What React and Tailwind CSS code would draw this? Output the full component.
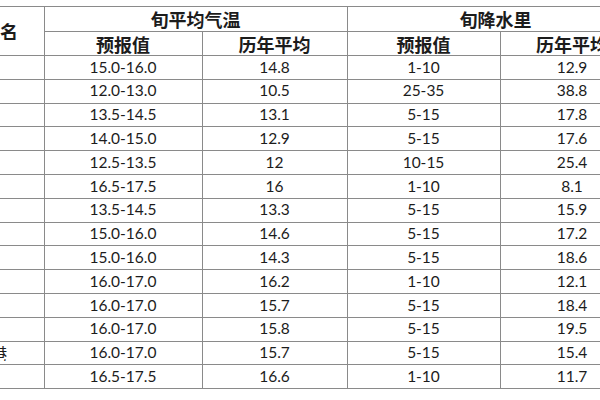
import React from "react";

const rows = [
  ["", "15.0-16.0", "14.8", "1-10", "12.9"],
  ["", "12.0-13.0", "10.5", "25-35", "38.8"],
  ["", "13.5-14.5", "13.1", "5-15", "17.8"],
  ["", "14.0-15.0", "12.9", "5-15", "17.6"],
  ["", "12.5-13.5", "12", "10-15", "25.4"],
  ["", "16.5-17.5", "16", "1-10", "8.1"],
  ["", "13.5-14.5", "13.3", "5-15", "15.9"],
  ["", "15.0-16.0", "14.6", "5-15", "17.2"],
  ["", "15.0-16.0", "14.3", "5-15", "18.6"],
  ["", "16.0-17.0", "16.2", "1-10", "12.1"],
  ["", "16.0-17.0", "15.7", "5-15", "18.4"],
  ["", "16.0-17.0", "15.8", "5-15", "19.5"],
  ["湄洲湾港", "16.0-17.0", "15.7", "5-15", "15.4"],
  ["", "16.5-17.5", "16.6", "1-10", "11.7"],
];

const cjk = "font-['Noto_Sans_CJK_SC',sans-serif]";
const num = "font-['Lato','Noto_Sans_CJK_SC',sans-serif]";

export default function App() {
  return (
    <div className="w-[600px] h-[400px] overflow-hidden bg-white pt-[6px]">
      <table className="table-fixed border-collapse w-[644px] text-[#1c1c1c]">
        <colgroup>
          <col className="w-[44px]" />
          <col className="w-[158px]" />
          <col className="w-[145px]" />
          <col className="w-[153px]" />
          <col className="w-[144px]" />
        </colgroup>
        <thead>
          <tr className="h-[25px]">
            <th
              rowSpan={2}
              className={`border-t border-r border-b border-[#8a8a8a] p-0 ${cjk} font-bold text-[18px] leading-none`}
            >
              <div className="w-[43px] overflow-hidden">
                <div className="ml-[-18px] whitespace-nowrap text-left">地名</div>
              </div>
            </th>
            <th
              colSpan={2}
              className={`border border-[#8a8a8a] p-0 ${cjk} font-bold text-[18px] leading-none`}
            >
              旬平均气温
            </th>
            <th
              colSpan={2}
              className={`border border-[#8a8a8a] p-0 ${cjk} font-bold text-[18px] leading-none`}
            >
              旬降水里
            </th>
          </tr>
          <tr className="h-[24px]">
            {["预报值", "历年平均", "预报值", "历年平均"].map((t, i) => (
              <th
                key={i}
                className={`border border-[#8a8a8a] p-0 ${cjk} font-bold text-[18px] leading-none`}
              >
                {t}
              </th>
            ))}
          </tr>
        </thead>
        <tbody>
          {rows.map((r, i) => (
            <tr key={i} className="h-[23.8px]">
              <td className={`border-t border-r border-b border-[#8a8a8a] p-0 ${cjk} text-[16px] leading-none`}>
                <div className="w-[43px] overflow-hidden">
                  <div className="ml-[-57px] whitespace-nowrap">{r[0]}</div>
                </div>
              </td>
              {r.slice(1).map((v, j) => (
                <td
                  key={j}
                  className={`border border-[#8a8a8a] p-0 text-center ${num} text-[15.5px] leading-none`}
                >
                  {v}
                </td>
              ))}
            </tr>
          ))}
        </tbody>
      </table>
    </div>
  );
}
